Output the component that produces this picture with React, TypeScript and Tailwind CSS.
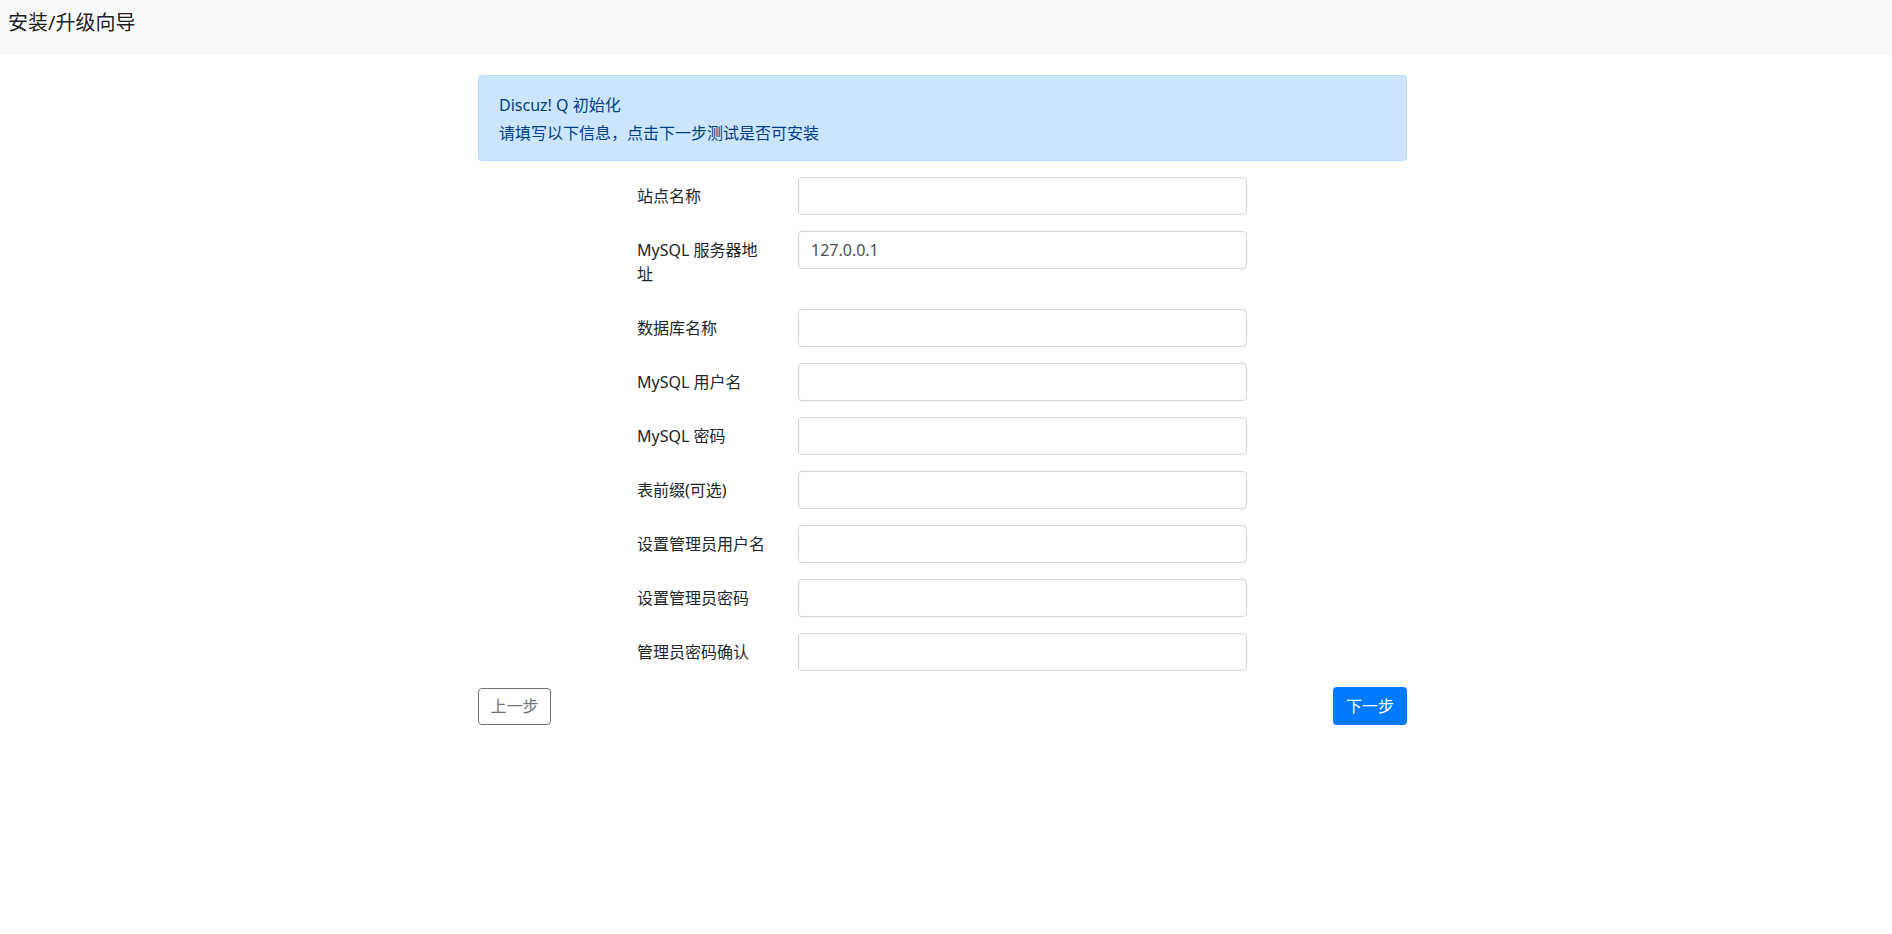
const fields: { label: string; value?: string; type?: string }[] = [
  { label: "站点名称" },
  { label: "MySQL 服务器地址", value: "127.0.0.1" },
  { label: "数据库名称" },
  { label: "MySQL 用户名" },
  { label: "MySQL 密码", type: "password" },
  { label: "表前缀(可选)" },
  { label: "设置管理员用户名" },
  { label: "设置管理员密码", type: "password" },
  { label: "管理员密码确认", type: "password" },
];

export default function App() {
  return (
    <div
      className="min-h-[934px] bg-white text-[#212529]"
      style={{ fontFamily: '"Noto Sans", "Noto Sans CJK SC", sans-serif' }}
    >
      <nav className="h-[55px] bg-[#f8f9fa] px-2 pt-2">
        <span className="text-[20px] leading-[30px] text-black/90">安装/升级向导</span>
      </nav>

      <div className="ml-[478px] mt-5 w-[929px]">
        <div className="mb-4 rounded border border-[#b8daff] bg-[#cce5ff] px-5 pb-[13px] pt-[15px] text-[16px] leading-[28px] text-[#004085]">
          <div>Discuz! Q 初始化</div>
          <div>请填写以下信息，点击下一步测试是否可安装</div>
        </div>

        <form className="ml-[159px] flex flex-col gap-4" onSubmit={(e) => e.preventDefault()}>
          {fields.map((f) => (
            <div key={f.label} className="flex items-start">
              <label className="w-[130px] pt-[7px] pb-[7px] text-[16px] leading-6">
                {f.label}
              </label>
              <input
                type={f.type ?? "text"}
                defaultValue={f.value}
                className="ml-[31px] h-[38px] w-[449px] rounded border border-[#ced4da] bg-white px-3 text-[16px] text-[#495057] outline-none"
              />
            </div>
          ))}
        </form>

        <div className="mt-4 flex items-center justify-between">
          <button className="h-[37px] w-[73px] rounded border border-[#6c757d] text-[16px] text-[#6c757d]">
            上一步
          </button>
          <button className="h-[38px] w-[74px] rounded bg-[#007bff] text-[16px] text-white">
            下一步
          </button>
        </div>
      </div>
    </div>
  );
}
